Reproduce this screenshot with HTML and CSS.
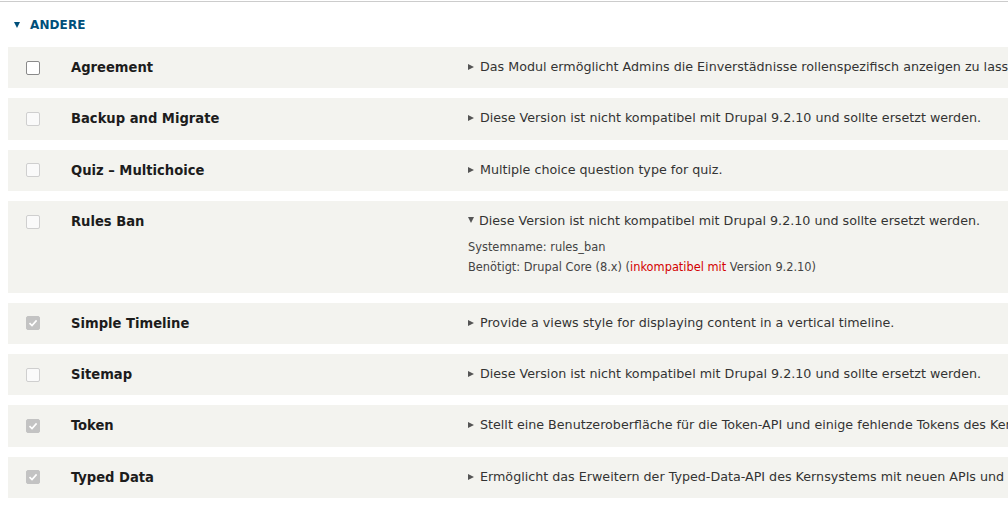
FILE: index.html
```html
<!DOCTYPE html>
<html lang="de">
<head>
<meta charset="utf-8">
<link rel="stylesheet" href="styles.css">
</head>
<body>
<div class="page">
  <div class="section-head"><span class="tri-down blue"></span><span class="section-title">ANDERE</span></div>
  <div class="modules">
    <div class="row">
      <div class="cb-cell"><span class="cb cb-active"></span></div>
      <div class="name">Agreement</div>
      <div class="desc"><div class="desc-line"><span class="tri-right"></span>Das Modul ermöglicht Admins die Einverstädnisse rollenspezifisch anzeigen zu lassen.</div></div>
    </div>
    <div class="row">
      <div class="cb-cell"><span class="cb cb-disabled"></span></div>
      <div class="name">Backup and Migrate</div>
      <div class="desc"><div class="desc-line"><span class="tri-right"></span>Diese Version ist nicht kompatibel mit Drupal 9.2.10 und sollte ersetzt werden.</div></div>
    </div>
    <div class="row">
      <div class="cb-cell"><span class="cb cb-disabled"></span></div>
      <div class="name">Quiz – Multichoice</div>
      <div class="desc"><div class="desc-line"><span class="tri-right"></span>Multiple choice question type for quiz.</div></div>
    </div>
    <div class="row row-open">
      <div class="cb-cell"><span class="cb cb-disabled"></span></div>
      <div class="name">Rules Ban</div>
      <div class="desc">
        <div class="desc-line"><span class="tri-down"></span>Diese Version ist nicht kompatibel mit Drupal 9.2.10 und sollte ersetzt werden.</div>
        <div class="details">
          <div>Systemname: rules_ban</div>
          <div>Benötigt: Drupal Core (8.x) (<span class="err">inkompatibel mit</span> Version 9.2.10)</div>
        </div>
      </div>
    </div>
    <div class="row">
      <div class="cb-cell"><span class="cb cb-checked"><svg viewBox="0 0 14 14" width="14" height="14"><path d="M3.5 7.2 L6 9.6 L10.6 4.4" fill="none" stroke="#fff" stroke-width="1.6"/></svg></span></div>
      <div class="name">Simple Timeline</div>
      <div class="desc"><div class="desc-line"><span class="tri-right"></span>Provide a views style for displaying content in a vertical timeline.</div></div>
    </div>
    <div class="row">
      <div class="cb-cell"><span class="cb cb-disabled"></span></div>
      <div class="name">Sitemap</div>
      <div class="desc"><div class="desc-line"><span class="tri-right"></span>Diese Version ist nicht kompatibel mit Drupal 9.2.10 und sollte ersetzt werden.</div></div>
    </div>
    <div class="row">
      <div class="cb-cell"><span class="cb cb-checked"><svg viewBox="0 0 14 14" width="14" height="14"><path d="M3.5 7.2 L6 9.6 L10.6 4.4" fill="none" stroke="#fff" stroke-width="1.6"/></svg></span></div>
      <div class="name">Token</div>
      <div class="desc"><div class="desc-line"><span class="tri-right"></span>Stellt eine Benutzeroberfläche für die Token-API und einige fehlende Tokens des Kernsystems bereit.</div></div>
    </div>
    <div class="row">
      <div class="cb-cell"><span class="cb cb-checked"><svg viewBox="0 0 14 14" width="14" height="14"><path d="M3.5 7.2 L6 9.6 L10.6 4.4" fill="none" stroke="#fff" stroke-width="1.6"/></svg></span></div>
      <div class="name">Typed Data</div>
      <div class="desc"><div class="desc-line"><span class="tri-right"></span>Ermöglicht das Erweitern der Typed-Data-API des Kernsystems mit neuen APIs und Funktionen.</div></div>
    </div>
  </div>
</div>
</body>
</html>
```
FILE: styles.css
```css
html, body {
  margin: 0;
  padding: 0;
  background: #fff;
  overflow: hidden;
}
body {
  font-family: "DejaVu Sans", "Liberation Sans", sans-serif;
  color: #222;
  width: 1008px;
  height: 522px;
}
.page {
  border-top: 1px solid #ccc;
  margin-top: 1px;
}
.section-head {
  display: flex;
  align-items: center;
  height: 45px;
  padding-left: 14px;
  box-sizing: border-box;
  padding-top: 1px;
}
.section-title {
  font-size: 12px;
  font-weight: bold;
  color: #004f7a;
  margin-left: 10px;
  letter-spacing: 0.1px;
}
.tri-down {
  display: inline-block;
  width: 0;
  height: 0;
  border-left: 3.5px solid transparent;
  border-right: 3.5px solid transparent;
  border-top: 6px solid #555;
  margin-right: 5px;
  vertical-align: 2px;
}
.tri-down.blue {
  border-top-color: #004f7a;
  margin-right: 0;
  vertical-align: 0;
}
.tri-right {
  display: inline-block;
  width: 0;
  height: 0;
  border-top: 3.5px solid transparent;
  border-bottom: 3.5px solid transparent;
  border-left: 6px solid #555;
  margin-right: 6px;
  vertical-align: 1px;
}
.modules {
  margin-left: 8px;
  width: 1200px;
}
.row {
  display: flex;
  align-items: flex-start;
  background: #f3f3ef;
  padding: 9px 0 11px;
  margin-bottom: 10px;
  line-height: 21.4px;
}
.row-open {
  padding-bottom: 16px;
}
.cb-cell {
  width: 63px;
  height: 21.4px;
  display: flex;
  align-items: center;
  padding-left: 18px;
  padding-top: 2px;
  box-sizing: border-box;
}
.cb {
  display: block;
  width: 14px;
  height: 14px;
  box-sizing: border-box;
  border-radius: 2px;
  background: #fff;
}
.cb-active {
  border: 1.5px solid #8a8a8a;
}
.cb-disabled {
  border: 1px solid #cfcfcf;
  background: #fafafa;
}
.cb-checked {
  background: #c3c3c3;
  border: 1px solid #c3c3c3;
  position: relative;
}
.cb-checked svg {
  position: absolute;
  left: -1px;
  top: -1px;
}
.name {
  width: 397px;
  height: 21.4px;
  font-family: "DejaVu Sans Condensed", "DejaVu Sans", sans-serif;
  font-size: 14.6px;
  font-weight: bold;
  color: #1c1c1c;
  white-space: nowrap;
}
.desc {
  font-size: 12.7px;
  color: #333;
  white-space: nowrap;
}
.desc-line {
  height: 21.4px;
}
.details {
  margin-top: 5px;
  font-size: 11.4px;
  line-height: 20px;
  color: #444;
}
.err {
  color: #d40000;
}
```
